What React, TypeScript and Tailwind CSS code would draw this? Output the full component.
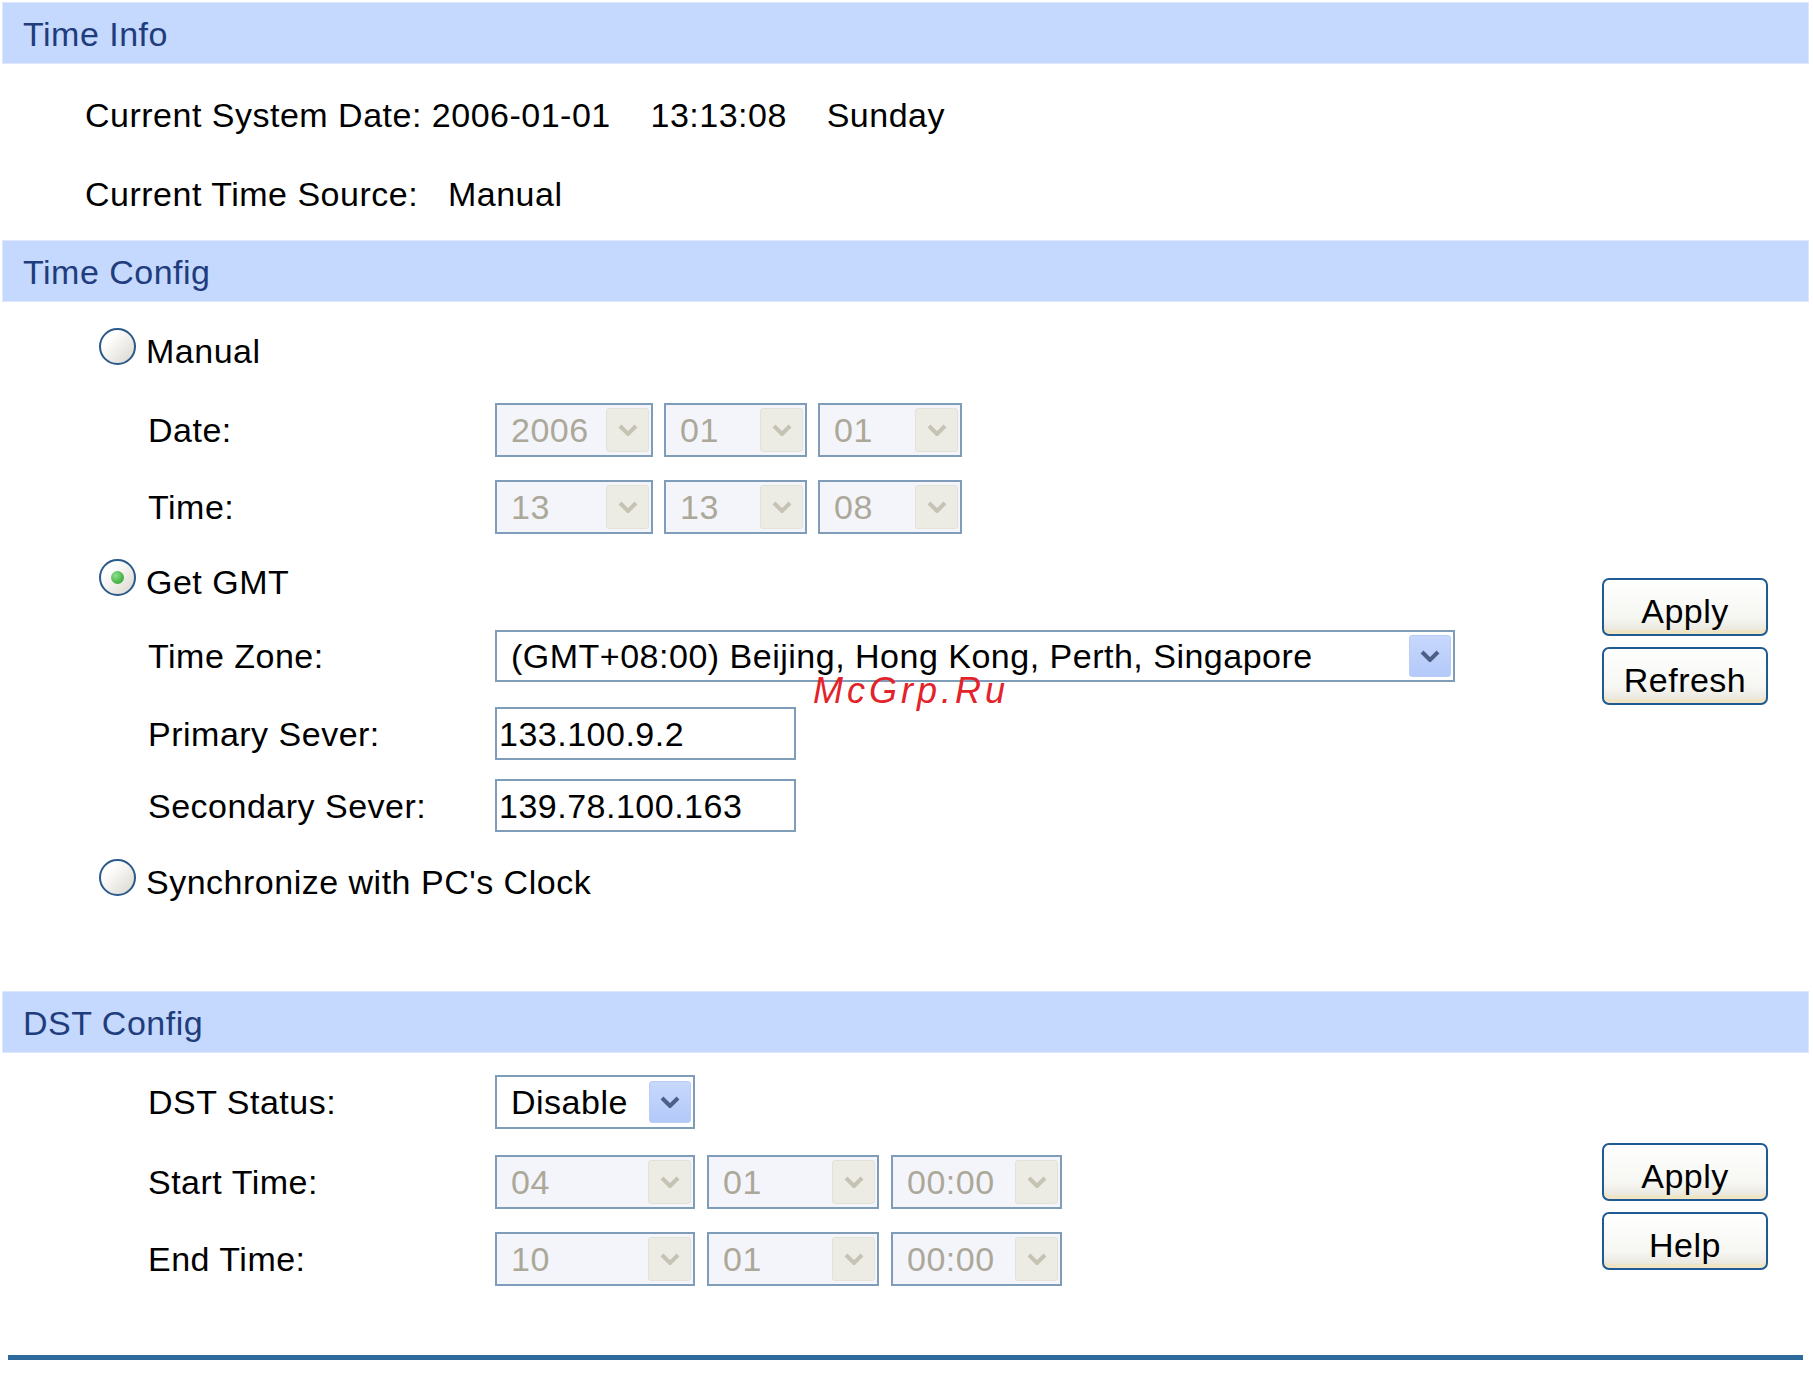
import React from "react";

function Chevron({ color }: { color: string }) {
  return (
    <svg width="20" height="12" viewBox="0 0 20 12">
      <polyline points="2,2 10,10 18,2" fill="none" stroke={color} strokeWidth="4" strokeLinejoin="miter" />
    </svg>
  );
}

interface SelectProps {
  value: string;
  className: string;
  disabled?: boolean;
}

function Select({ value, className, disabled }: SelectProps) {
  return (
    <div
      className={`${className} flex items-center border-2 border-[#7f9db9] pl-[14px] pr-[2px] ${
        disabled ? "bg-[#f4f5fa] text-[#aca899]" : "bg-white text-black"
      }`}
    >
      <span className="flex-1 whitespace-pre">{value}</span>
      {disabled ? (
        <div className="w-[43px] h-[44px] rounded-[3px] border border-[#e4e2d8] bg-[#ecebe4] flex items-center justify-center">
          <Chevron color="#c6c3b5" />
        </div>
      ) : (
        <div className="w-[42px] h-[42px] rounded-[3px] border border-[#b9cdf8] bg-[linear-gradient(180deg,#c8d8fd,#b3c9f9)] flex items-center justify-center">
          <Chevron color="#4b5f87" />
        </div>
      )}
    </div>
  );
}

function Radio({ checked, label }: { checked?: boolean; label: string }) {
  return (
    <div className="h-[40px] flex items-center pl-[97px]">
      <div className="w-[37px] h-[37px] rounded-full border-2 border-[#2a5a8a] bg-[linear-gradient(135deg,#ffffff_25%,#d9d6cc)] flex items-center justify-center">
        {checked && <div className="w-[13px] h-[13px] rounded-full bg-[radial-gradient(circle_at_35%_35%,#8ee08e,#1d9a1d)]" />}
      </div>
      <span className="ml-[10px] pt-[9px]">{label}</span>
    </div>
  );
}

function Label({ children }: { children: React.ReactNode }) {
  return <div className="w-[493px] shrink-0 pl-[146px]">{children}</div>;
}

function Button({ children }: { children: React.ReactNode }) {
  return (
    <button className="w-[166px] h-[58px] rounded-[7px] border-2 border-[#1f5a92] bg-[linear-gradient(180deg,#ffffff,#f6f6f2_70%,#e6e3d8)] shadow-[inset_0_-4px_0_#efe5c4] text-black text-[34px] leading-[40px] pt-[8px] flex items-center justify-center">
      {children}
    </button>
  );
}

function SectionHeader({ title }: { title: string }) {
  return (
    <div className="h-[62px] bg-[#c5d8fd] border border-[#dde8fe] flex items-center pl-[20px] pt-[2px] text-[#1f3d7c]">
      {title}
    </div>
  );
}

export default function App() {
  return (
    <div className="relative w-[1813px] min-h-[1380px] bg-white text-black text-[34px] leading-[40px] tracking-[0.5px] font-['Liberation_Sans',Arial,sans-serif]">
      <div className="ml-[2px] pt-[2px] w-[1807px]">
        {/* Time Info */}
        <SectionHeader title="Time Info" />
        <div className="h-[176px] pl-[83px]">
          <div className="pt-[31px] whitespace-pre">Current System Date: 2006-01-01    13:13:08    Sunday</div>
          <div className="mt-[39px] whitespace-pre">Current Time Source:   Manual</div>
        </div>

        {/* Time Config */}
        <SectionHeader title="Time Config" />
        <div className="h-[689px] flex items-start">
          <div className="flex-1">
            <div className="mt-[24px]">
              <Radio label="Manual" />
            </div>
            <div className="mt-[37px] h-[54px] flex items-center">
              <Label>Date:</Label>
              <div className="flex gap-[11px]">
                <Select value="2006" className="w-[158px] h-[54px]" disabled />
                <Select value="01" className="w-[143px] h-[54px]" disabled />
                <Select value="01" className="w-[144px] h-[54px]" disabled />
              </div>
            </div>
            <div className="mt-[23px] h-[54px] flex items-center">
              <Label>Time:</Label>
              <div className="flex gap-[11px]">
                <Select value="13" className="w-[158px] h-[54px]" disabled />
                <Select value="13" className="w-[143px] h-[54px]" disabled />
                <Select value="08" className="w-[144px] h-[54px]" disabled />
              </div>
            </div>
            <div className="mt-[23px]">
              <Radio checked label="Get GMT" />
            </div>
            <div className="mt-[33px] h-[52px] flex items-center">
              <Label>Time Zone:</Label>
              <Select value="(GMT+08:00) Beijing, Hong Kong, Perth, Singapore" className="w-[960px] h-[52px]" />
            </div>
            <div className="mt-[25px] h-[53px] flex items-center">
              <Label>Primary Sever:</Label>
              <div className="w-[301px] h-[53px] border-2 border-[#7f9db9] bg-white pl-[2px] flex items-center">133.100.9.2</div>
            </div>
            <div className="mt-[19px] h-[53px] flex items-center">
              <Label>Secondary Sever:</Label>
              <div className="w-[301px] h-[53px] border-2 border-[#7f9db9] bg-white pl-[2px] flex items-center">139.78.100.163</div>
            </div>
            <div className="mt-[25px]">
              <Radio label="Synchronize with PC's Clock" />
            </div>
          </div>
          <div className="mt-[276px] mr-[41px] w-[166px] flex flex-col gap-[11px]">
            <Button>Apply</Button>
            <Button>Refresh</Button>
          </div>
        </div>

        {/* DST Config */}
        <SectionHeader title="DST Config" />
        <div className="h-[302px] flex items-start">
          <div className="flex-1">
            <div className="mt-[22px] h-[54px] flex items-center">
              <Label>DST Status:</Label>
              <Select value="Disable" className="w-[200px] h-[54px]" />
            </div>
            <div className="mt-[26px] h-[54px] flex items-center">
              <Label>Start Time:</Label>
              <div className="flex gap-[12px]">
                <Select value="04" className="w-[200px] h-[54px]" disabled />
                <Select value="01" className="w-[172px] h-[54px]" disabled />
                <Select value="00:00" className="w-[171px] h-[54px]" disabled />
              </div>
            </div>
            <div className="mt-[23px] h-[54px] flex items-center">
              <Label>End Time:</Label>
              <div className="flex gap-[12px]">
                <Select value="10" className="w-[200px] h-[54px]" disabled />
                <Select value="01" className="w-[172px] h-[54px]" disabled />
                <Select value="00:00" className="w-[171px] h-[54px]" disabled />
              </div>
            </div>
          </div>
          <div className="mt-[90px] mr-[41px] w-[166px] flex flex-col gap-[11px]">
            <Button>Apply</Button>
            <Button>Help</Button>
          </div>
        </div>
        <div className="ml-[6px] w-[1795px] h-[5px] bg-[#2e6a9b]" />
      </div>

      {/* watermark */}
      <div className="absolute left-[813px] top-[673px] text-[36px] leading-[36px] italic tracking-[4px] text-[#e3232a]">
        McGrp.Ru
      </div>
    </div>
  );
}
